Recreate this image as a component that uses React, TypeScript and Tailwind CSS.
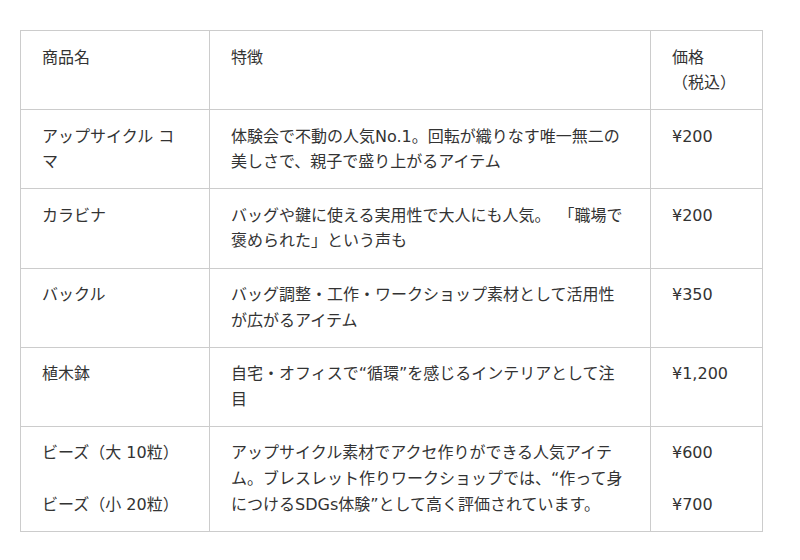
import React from "react";

type Row = {
  name: React.ReactNode;
  feature: React.ReactNode;
  price: React.ReactNode;
};

const rows: Row[] = [
  {
    name: "アップサイクル コマ",
    feature: "体験会で不動の人気No.1。回転が織りなす唯一無二の美しさで、親子で盛り上がるアイテム",
    price: "¥200",
  },
  {
    name: "カラビナ",
    feature: (
      <>
        バッグや鍵に使える実用性で大人にも人気
        <span className="[text-spacing-trim:space-all]">。</span>
        {"\u3000「職場で褒められた」という声も"}
      </>
    ),
    price: "¥200",
  },
  {
    name: "バックル",
    feature: "バッグ調整・工作・ワークショップ素材として活用性が広がるアイテム",
    price: "¥350",
  },
  {
    name: "植木鉢",
    feature: "自宅・オフィスで“循環”を感じるインテリアとして注目",
    price: "¥1,200",
  },
  {
    name: (
      <>
        ビーズ（大 10粒）
        <br />
        <br />
        ビーズ（小 20粒）
      </>
    ),
    feature:
      "アップサイクル素材でアクセ作りができる人気アイテム。ブレスレット作りワークショップでは、“作って身につけるSDGs体験”として高く評価されています。",
    price: (
      <>
        ¥600
        <br />
        <br />
        ¥700
      </>
    ),
  },
];

const cell = "border border-[#cccccc] px-[21px] py-[13.5px] align-top text-left font-normal";

export default function App() {
  return (
    <div
      className="min-h-[560px] bg-white pl-5 pt-[30px] text-[16px] leading-[1.6] text-[#333333]"
      style={{ fontFamily: '"DejaVu Sans", "Noto Sans CJK JP", sans-serif' }}
    >
      <table className="w-[742px] table-fixed border-collapse">
        <colgroup>
          <col className="w-[189px]" />
          <col className="w-[441px]" />
          <col className="w-[112px]" />
        </colgroup>
        <thead>
          <tr>
            <th className={cell}>商品名</th>
            <th className={cell}>特徴</th>
            <th className={`${cell} [text-spacing-trim:space-all]`}>
              価格
              <br />
              （税込）
            </th>
          </tr>
        </thead>
        <tbody>
          {rows.map((r, i) => (
            <tr key={i}>
              <td className={cell}>{r.name}</td>
              <td className={cell}>{r.feature}</td>
              <td className={cell}>{r.price}</td>
            </tr>
          ))}
        </tbody>
      </table>
    </div>
  );
}
